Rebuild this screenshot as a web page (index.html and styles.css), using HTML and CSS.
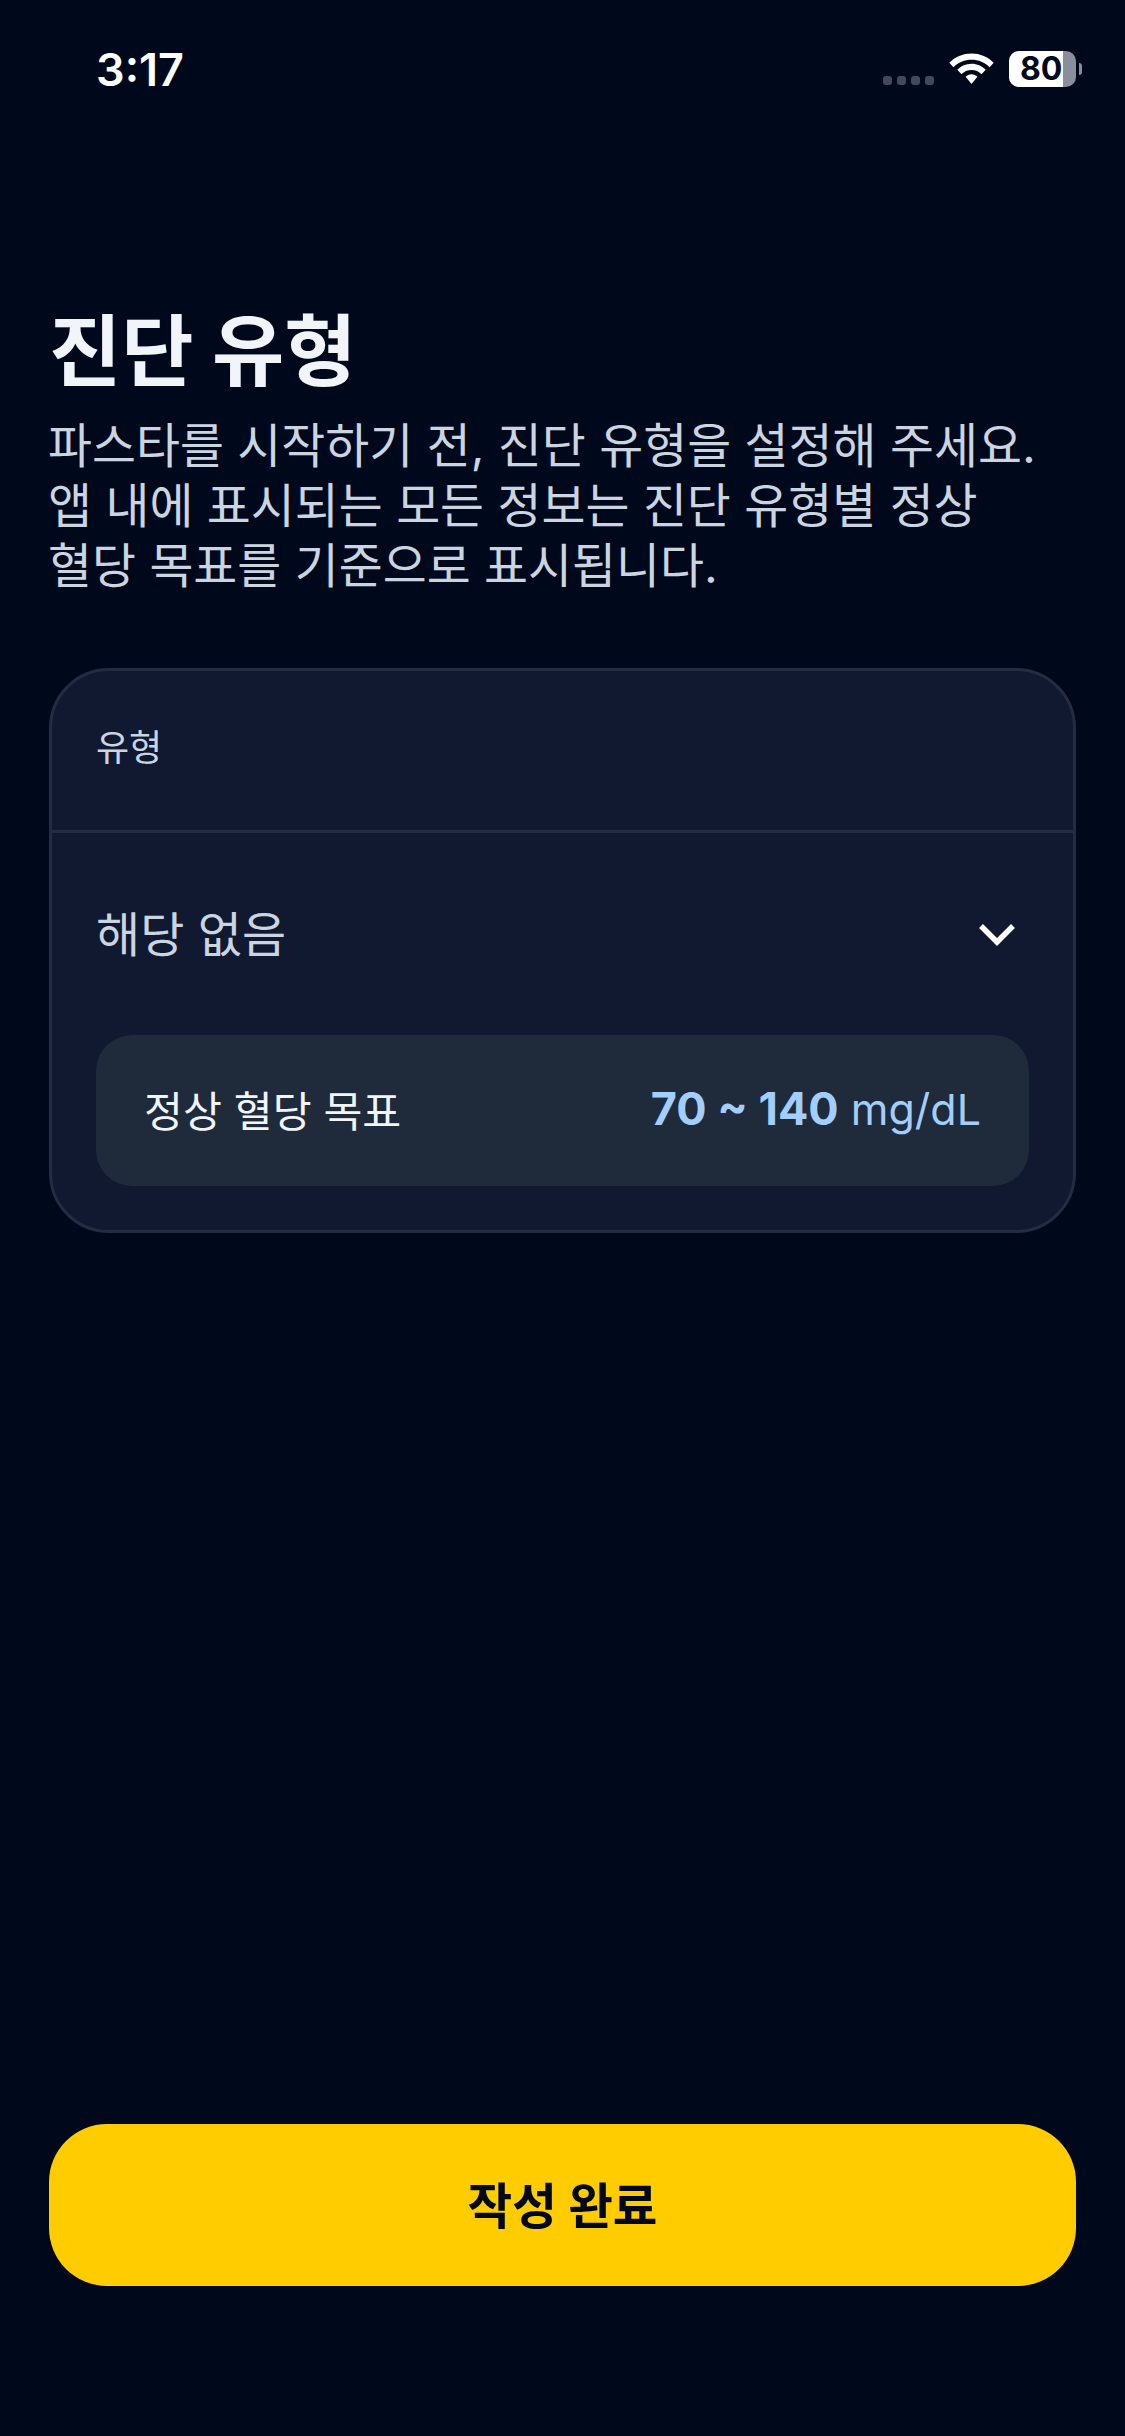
FILE: index.html
```html
<!DOCTYPE html>
<html lang="ko">
<head>
  <meta charset="UTF-8">
  <title>진단 유형</title>
  <link rel="stylesheet" href="styles.css">
</head>
<body>
  <div class="screen">
    <div class="status-bar">
      <span class="time">3:17</span>
      <div class="status-icons">
        <div class="signal"><i></i><i></i><i></i><i></i></div>
        <svg class="wifi" viewBox="1.500 3 43 31" width="45" height="32">
          <path d="M23 3.500C14.500 3.500 7 6.800 1.500 12.500L5.500 16.700C10.100 12.100 16.200 9.500 23 9.500S35.900 12.100 40.500 16.700L44.500 12.500C39 6.800 31.500 3.500 23 3.500Z" fill="#fff"/>
          <path d="M23 13.500C17.600 13.500 12.800 15.700 9.300 19.300L13.300 23.500C15.800 21 19.200 19.500 23 19.500S30.200 21 32.700 23.500L36.700 19.300C33.200 15.700 28.400 13.500 23 13.500Z" fill="#fff"/>
          <path d="M23 23.500C20.800 23.500 18.800 24.400 17.300 25.900L23 33L28.700 25.900C27.200 24.400 25.200 23.500 23 23.500Z" fill="#fff"/>
        </svg>
        <div class="battery">
          <div class="battery-body"><span class="battery-fill"></span><span class="battery-num">80</span></div>
          <span class="battery-cap"></span>
        </div>
      </div>
    </div>

    <h1 class="title">진단 유형</h1>
    <p class="desc">파스타를 시작하기 전, 진단 유형을 설정해 주세요.<br>앱 내에 표시되는 모든 정보는 진단 유형별 정상<br>혈당 목표를 기준으로 표시됩니다.</p>

    <div class="card">
      <div class="card-head">유형</div>
      <div class="select-row">
        <span>해당 없음</span>
        <svg viewBox="0 0 38 24" width="38" height="24">
          <path d="M3 4L19 20L35 4" fill="none" stroke="#fff" stroke-width="5.500"/>
        </svg>
      </div>
      <div class="target">
        <span class="target-label">정상 혈당 목표</span>
        <span class="target-value"><b>70 ~ 140</b> mg/dL</span>
      </div>
    </div>

    <button class="submit" type="button">작성 완료</button>
  </div>
</body>
</html>
```

FILE: styles.css
```css
* { box-sizing: border-box; }
html, body { margin: 0; padding: 0; }
body {
  background-color: #00081b;
  font-family: Inter, "Noto Sans CJK KR", sans-serif;
  color: #f1f5f9;
}
.screen {
  height: 2436px;
  padding: 0 49px 150px;
  display: flex;
  flex-direction: column;
}

/* status bar */
.status-bar {
  height: 138px;
  display: flex;
  justify-content: space-between;
  align-items: center;
  margin: 0 -6px 0 47px;
}
.time { font-size: 45px; font-weight: 600; color: #fff; }
.status-icons { display: flex; align-items: center; gap: 15px; }
.signal { display: flex; gap: 5px; margin-top: 23px; }
.signal i { width: 9px; height: 9px; border-radius: 3px; background-color: #424959; }
.battery { display: flex; align-items: center; gap: 3px; }
.battery-body {
  position: relative;
  width: 67px; height: 36px;
  border-radius: 10px;
  background-color: #8a8d9b;
}
.battery-fill {
  position: absolute; left: 0; top: 0; bottom: 0; width: 80%;
  border-radius: 10px 0 0 10px;
  background-color: #fff;
}
.battery-num {
  position: relative;
  display: block;
  padding-left: 11px;
  font-size: 32px; font-weight: 700; line-height: 36px;
  color: #00081b;
}
.battery-cap { width: 3px; height: 12px; border-radius: 0 4px 4px 0; background-color: #8a8d9b; }

/* heading */
.title {
  margin: 164px 0 0;
  font-size: 78.500px; font-weight: 700; line-height: 100px;
}
.desc {
  margin: 14px 0 0 -1px;
  font-size: 47.800px; line-height: 60px;
  color: #cbd5e1;
}

/* card */
.card {
  margin-top: 71.500px;
  height: 565px;
  background-color: #10192f;
  border: 3px solid #232c42;
  border-radius: 60px;
  padding: 0 44px;
}
.card-head {
  height: 162px;
  margin: 0 -44px;
  padding: 0 44px 10px;
  border-bottom: 3px solid #232c42;
  display: flex;
  align-items: center;
  font-size: 36px;
  color: #cbd5e1;
}
.select-row {
  height: 202px;
  padding-bottom: 6px;
  display: flex;
  justify-content: space-between;
  align-items: center;
  font-size: 48px;
  color: #cbd5e1;
}
.select-row svg { margin: 6px 13px 0 0; }
.target {
  height: 151px;
  padding: 0 48px 4px;
  background-color: #1f2a3b;
  border-radius: 36px;
  display: flex;
  justify-content: space-between;
  align-items: center;
}
.target-label { font-size: 42.300px; color: #f1f5f9; }
.target-value { font-size: 43px; color: #a3cdfb; }
.target-value b { font-size: 45px; font-weight: 700; }

/* button */
.submit {
  margin-top: auto;
  height: 162px;
  padding-bottom: 6px;
  border: none;
  border-radius: 58px;
  background-color: #ffcc00;
  color: #00081b;
  font-family: inherit;
  font-size: 48.500px;
  font-weight: 700;
}
```
